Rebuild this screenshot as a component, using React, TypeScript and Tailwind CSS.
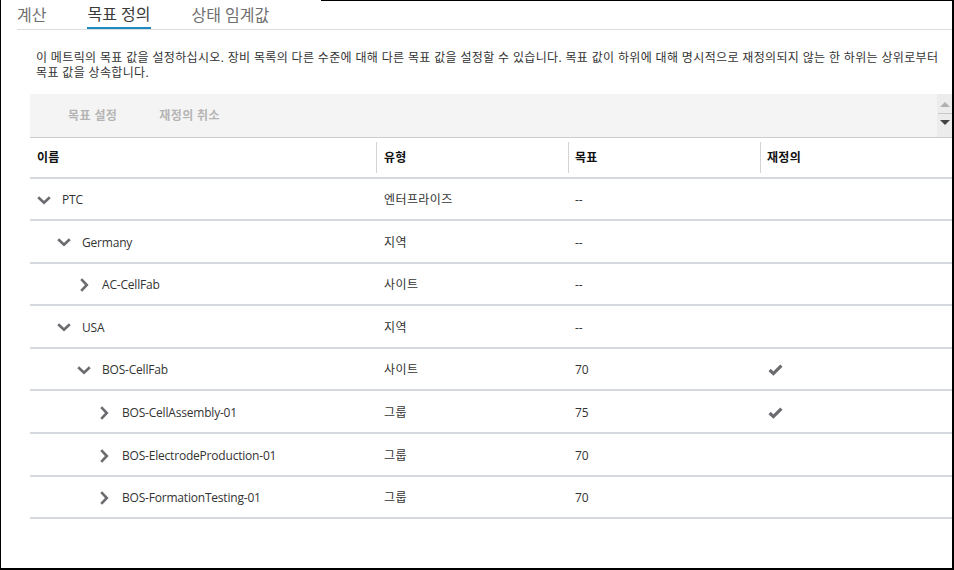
import React from "react";

type Row = {
  name: string;
  level: number;
  expanded: boolean;
  type: string;
  target: string;
  override: boolean;
  h: string;
};

const rows: Row[] = [
  { name: "PTC", level: 0, expanded: true, type: "엔터프라이즈", target: "--", override: false, h: "h-[42px]" },
  { name: "Germany", level: 1, expanded: true, type: "지역", target: "--", override: false, h: "h-[43px]" },
  { name: "AC-CellFab", level: 2, expanded: false, type: "사이트", target: "--", override: false, h: "h-[42px]" },
  { name: "USA", level: 1, expanded: true, type: "지역", target: "--", override: false, h: "h-[43px]" },
  { name: "BOS-CellFab", level: 2, expanded: true, type: "사이트", target: "70", override: true, h: "h-[42px]" },
  { name: "BOS-CellAssembly-01", level: 3, expanded: false, type: "그룹", target: "75", override: true, h: "h-[43px]" },
  { name: "BOS-ElectrodeProduction-01", level: 3, expanded: false, type: "그룹", target: "70", override: false, h: "h-[43px]" },
  { name: "BOS-FormationTesting-01", level: 3, expanded: false, type: "그룹", target: "70", override: false, h: "h-[42px]" },
];

const indentClass = ["pl-[7px]", "pl-[27px]", "pl-[47px]", "pl-[67px]"];

function ChevronDown() {
  return (
    <svg width="14" height="9" viewBox="0 0 14 9" className="block">
      <polyline points="1.2,1.2 7,6.8 12.8,1.2" fill="none" stroke="#6b6b70" strokeWidth="2.6" strokeLinecap="butt" />
    </svg>
  );
}

function ChevronRight() {
  return (
    <svg width="9" height="14" viewBox="0 0 9 14" className="block">
      <polyline points="1.2,1.2 6.8,7 1.2,12.8" fill="none" stroke="#6b6b70" strokeWidth="2.6" strokeLinecap="butt" />
    </svg>
  );
}

function CheckMark() {
  return (
    <svg width="15" height="12" viewBox="0 0 15 12" className="block">
      <polyline points="1.6,6 5.4,9.6 13.4,1.6" fill="none" stroke="#6b6b70" strokeWidth="3.2" strokeLinecap="butt" strokeLinejoin="miter" />
    </svg>
  );
}

export default function App() {
  return (
    <div
      className="relative w-[954px] h-[570px] bg-white border-l border-r-2 border-b-2 border-black overflow-hidden"
      style={{ fontFamily: "'Open Sans', 'Noto Sans CJK KR', sans-serif" }}
    >
      <div className="absolute top-0 left-[320px] right-0 h-px bg-black" />
      {/* Tabs */}
      <div className="ml-[16px] flex h-[30px] border-b border-[#dcdcdc] text-[16px] leading-none">
        <div className="flex items-center h-full pt-px text-[#707070]">계산</div>
        <div className="flex items-center h-full ml-[41px] pt-px border-b-2 border-[#1c8bc4] -mb-px text-[#3a3a3a]">목표 정의</div>
        <div className="flex items-center h-full ml-[41px] pt-px text-[#707070]">상태 임계값</div>
      </div>

      {/* Description */}
      <div className="pl-[35px] pt-[20px] text-[12px] leading-[15px] text-[#333] tracking-[0.35px]">
        <p className="whitespace-nowrap h-[15px]">이 메트릭의 목표 값을 설정하십시오. 장비 목록의 다른 수준에 대해 다른 목표 값을 설정할 수 있습니다. 목표 값이 하위에 대해 명시적으로 재정의되지 않는 한 하위는 상위로부터</p>
        <p className="whitespace-nowrap h-[15px]">목표 값을 상속합니다.</p>
      </div>

      {/* Table block */}
      <div className="ml-[29px] mt-[14px]">
        {/* Toolbar */}
        <div className="flex h-[44px] bg-[#f4f4f4] border-b border-[#c9cdd2]">
          <div className="flex-1 flex items-center text-[12px] font-bold text-[#b4b4b4] tracking-[0.4px]">
            <span className="ml-[38px]">목표 설정</span>
            <span className="ml-[42px]">재정의 취소</span>
          </div>
          <div className="w-[15px] flex flex-col items-center bg-[#ececec]">
            <div className="mt-[8px] w-0 h-0 border-l-[5px] border-r-[5px] border-b-[5px] border-l-transparent border-r-transparent border-b-[#b0b0b0]" />
            <div className="mt-[6px] w-[14px] h-px bg-[#c8c8c8]" />
            <div className="mt-[6px] w-0 h-0 border-l-[5px] border-r-[5px] border-t-[5px] border-l-transparent border-r-transparent border-t-[#444]" />
          </div>
        </div>

        {/* Header */}
        <div className="flex h-[41px] border-b-2 border-[#d6d9dd] text-[12px] font-bold text-[#111] tracking-[0.3px]">
          <div className="w-[346px] flex items-center pl-[7px]">이름</div>
          <div className="w-px my-[4px] bg-[#d4d4d4]" />
          <div className="w-[191px] flex items-center pl-[7px]">유형</div>
          <div className="w-px my-[4px] bg-[#d4d4d4]" />
          <div className="w-[191px] flex items-center pl-[6px]">목표</div>
          <div className="w-px my-[4px] bg-[#d4d4d4]" />
          <div className="flex-1 flex items-center pl-[6px]">재정의</div>
        </div>

        {/* Rows */}
        {rows.map((r, i) => (
          <div
            key={i}
            className={`flex pt-[2px] border-b-2 border-[#d6d9dd] text-[12px] text-[#333] ${r.h}`}
          >
            <div className={`w-[346px] flex items-center ${indentClass[r.level]}`}>
              <div className="w-[14px] flex items-center justify-center">
                {r.expanded ? <ChevronDown /> : <ChevronRight />}
              </div>
              <span className="ml-[11px] tracking-[-0.2px]">{r.name}</span>
            </div>
            <div className="w-[192px] flex items-center pl-[8px] tracking-[0.4px]">{r.type}</div>
            <div className="w-[192px] flex items-center pl-[7px]">{r.target}</div>
            <div className="flex-1 flex items-center pl-[8px]">{r.override ? <CheckMark /> : null}</div>
          </div>
        ))}
      </div>
    </div>
  );
}
